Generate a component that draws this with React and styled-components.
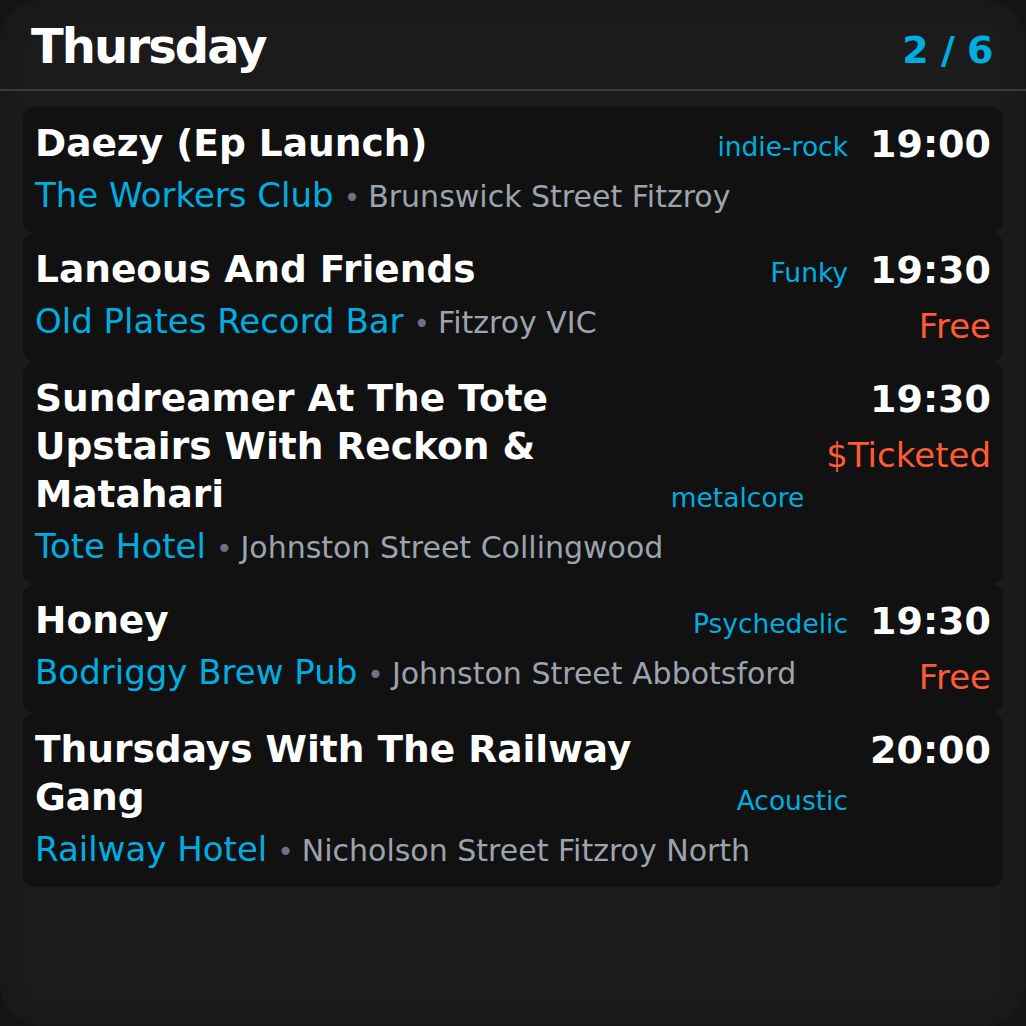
import styled, { createGlobalStyle } from "styled-components";

const events = [
  {
    title: "Daezy (Ep Launch)",
    genre: "indie-rock",
    time: "19:00",
    venue: "The Workers Club",
    address: "Brunswick Street Fitzroy",
  },
  {
    title: "Laneous And Friends",
    genre: "Funky",
    time: "19:30",
    price: "Free",
    venue: "Old Plates Record Bar",
    address: "Fitzroy VIC",
  },
  {
    title: "Sundreamer At The Tote Upstairs With Reckon & Matahari",
    genre: "metalcore",
    time: "19:30",
    price: "$Ticketed",
    venue: "Tote Hotel",
    address: "Johnston Street Collingwood",
  },
  {
    title: "Honey",
    genre: "Psychedelic",
    time: "19:30",
    price: "Free",
    venue: "Bodriggy Brew Pub",
    address: "Johnston Street Abbotsford",
  },
  {
    title: "Thursdays With The Railway Gang",
    genre: "Acoustic",
    time: "20:00",
    venue: "Railway Hotel",
    address: "Nicholson Street Fitzroy North",
  },
];

const GlobalStyle = createGlobalStyle`
  html, body {
    margin: 0;
    padding: 0;
    background: #141414;
  }
  body {
    font-family: "DejaVu Sans", "Liberation Sans", sans-serif;
  }
`;

const EventCard = ({ event }) => (
  <Card>
    <Main>
      <TitleRow>
        <Title>{event.title}</Title>
        <Genre>{event.genre}</Genre>
      </TitleRow>
      <VenueLine>
        <Venue>{event.venue}</Venue>
        <Dot>•</Dot>
        <Address>{event.address}</Address>
      </VenueLine>
    </Main>
    <Side>
      <Time>{event.time}</Time>
      {event.price && <Price>{event.price}</Price>}
    </Side>
  </Card>
);

export default function App() {
  return (
    <>
      <GlobalStyle />
      <Panel>
        <Header>
          <Day>Thursday</Day>
          <Pager>2 / 6</Pager>
        </Header>
        <List>
          {events.map((e) => (
            <EventCard key={e.title} event={e} />
          ))}
        </List>
      </Panel>
    </>
  );
}

const Panel = styled.div`
  width: 1026px;
  height: 1026px;
  box-sizing: border-box;
  background: #1b1b1b;
  border-radius: 40px;
  box-shadow: inset 0 0 24px rgba(0, 0, 0, 0.22);
  overflow: hidden;
  display: flex;
  flex-direction: column;
`;

const Header = styled.div`
  display: flex;
  justify-content: space-between;
  align-items: baseline;
  height: 91px;
  box-sizing: border-box;
  padding: 0 33px 0 31px;
  border-bottom: 2px solid #363b46;
`;

const Day = styled.div`
  font-size: 48px;
  line-height: 92px;
  font-weight: 700;
  letter-spacing: -1.9px;
  color: #ffffff;
`;

const Pager = styled.div`
  font-size: 38px;
  font-weight: 700;
  letter-spacing: -0.5px;
  color: #00ade0;
`;

const List = styled.div`
  display: flex;
  flex-direction: column;
  padding: 16px 23px 0;
`;

const Card = styled.div`
  display: flex;
  align-items: flex-start;
  gap: 22px;
  padding: 12px 12px 11px;
  background: #111111;
  border-radius: 12px;
`;

const Main = styled.div`
  display: flex;
  flex-direction: column;
  flex: 1 1 0;
  min-width: 0;
`;

const TitleRow = styled.div`
  display: flex;
  align-items: flex-end;
  gap: 24px;
`;

const Title = styled.div`
  flex: 1 1 0;
  font-size: 37.5px;
  line-height: 48px;
  font-weight: 700;
  color: #ffffff;
`;

const Genre = styled.div`
  font-size: 26.5px;
  line-height: 40px;
  color: #00ade0;
  white-space: nowrap;
`;

const VenueLine = styled.div`
  display: flex;
  align-items: baseline;
  margin-top: 4px;
  line-height: 48px;
  white-space: nowrap;
`;

const Venue = styled.span`
  font-size: 34px;
  color: #00ade0;
`;

const Dot = styled.span`
  font-size: 28px;
  color: #6b7280;
  margin: 0 8px 0 10px;
`;

const Address = styled.span`
  font-size: 30px;
  color: #9ca3af;
`;

const Side = styled.div`
  display: flex;
  flex-direction: column;
  align-items: flex-end;
  padding-top: 1px;
`;

const Time = styled.div`
  font-size: 38px;
  line-height: 49px;
  font-weight: 700;
  color: #ffffff;
`;

const Price = styled.div`
  margin-top: 7px;
  font-size: 34px;
  line-height: 49px;
  color: #ff5a36;
`;
